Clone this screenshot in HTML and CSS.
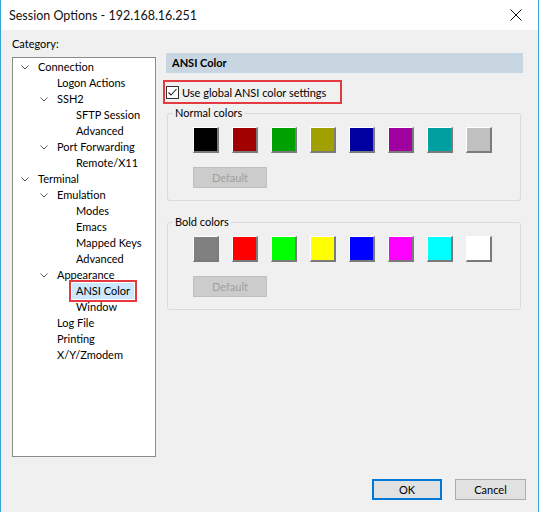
FILE: index.html
```html
<!DOCTYPE html>
<html>
<head>
<meta charset="utf-8">
<link rel="stylesheet" href="styles.css">
</head>
<body>
<div class="window">
  <div class="titlebar">
    <span class="title">Session Options - 192.168.16.251</span>
    <span class="close"><svg width="12" height="12" viewBox="0 0 12 12"><path d="M0.5 0.5 L11.5 11.5 M11.5 0.5 L0.5 11.5" stroke="#111" stroke-width="1" fill="none"/></svg></span>
  </div>
  <div class="body">
    <div class="main">
      <div class="left">
        <div class="cat-label">Category:</div>
        <div class="tree">
          <div class="row l0"><span class="arrow"><svg width="8" height="5" viewBox="0 0 8 5"><path d="M0.5 0.5 L4 4 L7.5 0.5" stroke="#555" fill="none"/></svg></span><span class="lbl">Connection</span></div>
          <div class="row l1"><span class="arrow"></span><span class="lbl">Logon Actions</span></div>
          <div class="row l1"><span class="arrow"><svg width="8" height="5" viewBox="0 0 8 5"><path d="M0.5 0.5 L4 4 L7.5 0.5" stroke="#555" fill="none"/></svg></span><span class="lbl">SSH2</span></div>
          <div class="row l2"><span class="arrow"></span><span class="lbl">SFTP Session</span></div>
          <div class="row l2"><span class="arrow"></span><span class="lbl">Advanced</span></div>
          <div class="row l1"><span class="arrow"><svg width="8" height="5" viewBox="0 0 8 5"><path d="M0.5 0.5 L4 4 L7.5 0.5" stroke="#555" fill="none"/></svg></span><span class="lbl">Port Forwarding</span></div>
          <div class="row l2"><span class="arrow"></span><span class="lbl">Remote/X11</span></div>
          <div class="row l0"><span class="arrow"><svg width="8" height="5" viewBox="0 0 8 5"><path d="M0.5 0.5 L4 4 L7.5 0.5" stroke="#555" fill="none"/></svg></span><span class="lbl">Terminal</span></div>
          <div class="row l1"><span class="arrow"><svg width="8" height="5" viewBox="0 0 8 5"><path d="M0.5 0.5 L4 4 L7.5 0.5" stroke="#555" fill="none"/></svg></span><span class="lbl">Emulation</span></div>
          <div class="row l2"><span class="arrow"></span><span class="lbl">Modes</span></div>
          <div class="row l2"><span class="arrow"></span><span class="lbl">Emacs</span></div>
          <div class="row l2"><span class="arrow"></span><span class="lbl">Mapped Keys</span></div>
          <div class="row l2"><span class="arrow"></span><span class="lbl">Advanced</span></div>
          <div class="row l1"><span class="arrow"><svg width="8" height="5" viewBox="0 0 8 5"><path d="M0.5 0.5 L4 4 L7.5 0.5" stroke="#555" fill="none"/></svg></span><span class="lbl">Appearance</span></div>
          <div class="row l2"><span class="arrow"></span><span class="lbl selected">ANSI Color</span></div>
          <div class="row l2"><span class="arrow"></span><span class="lbl">Window</span></div>
          <div class="row l1"><span class="arrow"></span><span class="lbl">Log File</span></div>
          <div class="row l1"><span class="arrow"></span><span class="lbl">Printing</span></div>
          <div class="row l1"><span class="arrow"></span><span class="lbl">X/Y/Zmodem</span></div>
        </div>
      </div>
      <div class="right">
        <div class="panel-header">ANSI Color</div>
        <div class="check-row">
          <span class="checkbox"><svg width="11" height="11" viewBox="0 0 11 11"><path d="M1.5 5.5 L4 8 L9.5 2" stroke="#222" stroke-width="1.1" fill="none"/></svg></span>
          <span>Use global ANSI color settings</span>
        </div>
        <fieldset class="group normal">
          <legend>Normal colors</legend>
          <div class="group-inner">
            <div class="swatches">
              <span class="swatch c-black"></span>
              <span class="swatch c-red"></span>
              <span class="swatch c-green"></span>
              <span class="swatch c-yellow"></span>
              <span class="swatch c-blue"></span>
              <span class="swatch c-magenta"></span>
              <span class="swatch c-cyan"></span>
              <span class="swatch c-white"></span>
            </div>
            <button class="btn-default" disabled>Default</button>
          </div>
        </fieldset>
        <fieldset class="group bold">
          <legend>Bold colors</legend>
          <div class="group-inner">
            <div class="swatches">
              <span class="swatch b-black"></span>
              <span class="swatch b-red"></span>
              <span class="swatch b-green"></span>
              <span class="swatch b-yellow"></span>
              <span class="swatch b-blue"></span>
              <span class="swatch b-magenta"></span>
              <span class="swatch b-cyan"></span>
              <span class="swatch b-white"></span>
            </div>
            <button class="btn-default" disabled>Default</button>
          </div>
        </fieldset>
      </div>
    </div>
    <div class="footer">
      <button class="btn ok">OK</button>
      <button class="btn">Cancel</button>
    </div>
  </div>
</div>
</body>
</html>
```
FILE: styles.css
```css
* { box-sizing: border-box; }
html, body { margin: 0; padding: 0; }
body {
  width: 539px;
  height: 512px;
  overflow: hidden;
  font-family: Lato, "Liberation Sans", sans-serif;
  font-size: 11px;
  color: #000;
  background: #f0f0f0;
}
.window {
  width: 539px;
  height: 512px;
  border-left: 1px solid #35a6d6;
  border-right: 1px solid #35a6d6;
  display: flex;
  flex-direction: column;
}
.titlebar {
  height: 30px;
  background: #fff;
  display: flex;
  align-items: center;
  justify-content: space-between;
  padding-left: 8px;
  flex: none;
}
.title { font-size: 12.5px; color: #111; }
.close {
  width: 46px;
  height: 30px;
  display: flex;
  align-items: center;
  justify-content: center;
  padding-left: 1px;
}
.body {
  flex: 1;
  background: #f0f0f0;
  display: flex;
  flex-direction: column;
  padding-top: 6px;
}
.main { display: flex; }
.left { margin-left: 11px; width: 144px; }
.cat-label { height: 16px; line-height: 16px; }
.tree {
  margin-top: 5px;
  width: 144px;
  height: 400px;
  background: #fff;
  border: 1px solid #8c8c8c;
  padding-top: 1px;
}
.row {
  height: 16px;
  line-height: 16px;
  display: flex;
  align-items: center;
  white-space: nowrap;
}
.row.l0 { padding-left: 8px; }
.row.l1 { padding-left: 27px; }
.row.l2 { padding-left: 46px; }
.arrow {
  width: 17px;
  flex: none;
  display: flex;
  align-items: center;
  height: 16px;
}
.arrow svg { display: block; margin-top: 1px; }
.lbl.selected {
  background: #cce8ff;
  margin-left: -4px;
  padding: 0 4px;
  outline: 2px solid #e33b40;
  outline-offset: 1px;
}
.right {
  margin-left: 10px;
  margin-top: 17px;
  width: 357px;
}
.panel-header {
  height: 20px;
  line-height: 20px;
  background: #c8d6e2;
  font-weight: bold;
  padding-left: 6px;
}
.check-row {
  display: inline-flex;
  align-items: center;
  margin-top: 7px;
  margin-left: -3px;
  height: 24px;
  border: 2px solid #e33b40;
  padding: 0 14px 0 1px;
  gap: 3px;
}
.checkbox {
  width: 13px;
  height: 13px;
  border: 1px solid #333;
  background: #fff;
  display: flex;
  align-items: center;
  justify-content: center;
}
.checkbox svg { display: block; }
.group {
  display: block;
  margin: 1px 0 0 1px;
  width: 354px;
  padding: 0;
  border: 1px solid #dadada;
  border-radius: 3px;
}
.group.bold { margin-top: 13px; }
.group legend {
  padding: 0 2px;
  margin-left: 5px;
  height: 16px;
  line-height: 16px;
}
.group-inner { padding: 6px 0 12px 25px; }
.swatches { display: flex; gap: 13px; }
.swatch {
  width: 26px;
  height: 26px;
  border-top: 1px solid #fff;
  border-left: 1px solid #fff;
  border-right: 2px solid #7a7a7a;
  border-bottom: 2px solid #7a7a7a;
}
.c-black { background: #000000; }
.c-red { background: #a00000; }
.c-green { background: #00a000; }
.c-yellow { background: #a0a000; }
.c-blue { background: #0000a0; }
.c-magenta { background: #a000a0; }
.c-cyan { background: #00a0a0; }
.c-white { background: #c0c0c0; }
.b-black { background: #808080; }
.b-red { background: #ff0000; }
.b-green { background: #00ff00; }
.b-yellow { background: #ffff00; }
.b-blue { background: #0000ff; }
.b-magenta { background: #ff00ff; }
.b-cyan { background: #00ffff; }
.b-white { background: #ffffff; }
.btn-default {
  display: block;
  margin-top: 14px;
  width: 74px;
  height: 21px;
  background: #cccccc;
  border: 1px solid #bfbfbf;
  color: #a0a0a0;
  font-family: inherit;
  font-size: 11px;
  padding: 0;
}
.footer {
  margin-top: auto;
  display: flex;
  justify-content: flex-end;
  gap: 13px;
  padding: 0 12px 12px 0;
}
.btn {
  width: 71px;
  height: 21px;
  background: #e1e1e1;
  border: 1px solid #adadad;
  font-family: inherit;
  font-size: 11px;
  color: #000;
  padding: 0;
}
.btn.ok {
  width: 70px;
  border: 2px solid #0078d7;
}
```
